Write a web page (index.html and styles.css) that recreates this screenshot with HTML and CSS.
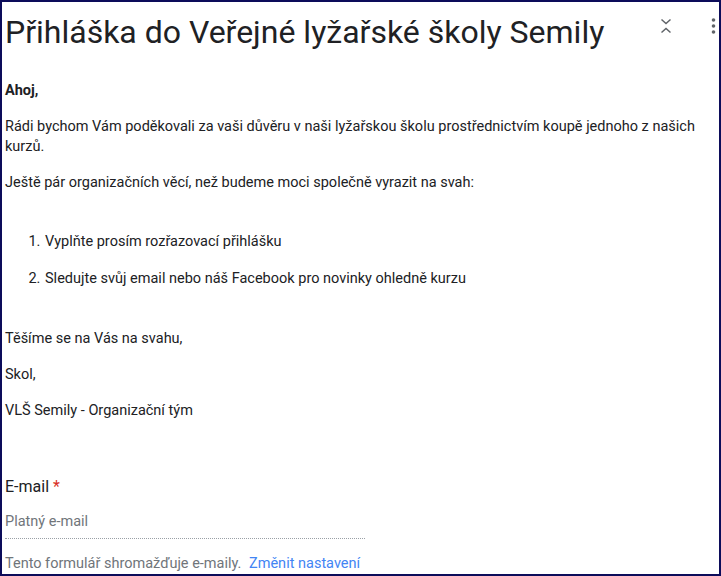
FILE: index.html
```html
<!DOCTYPE html>
<html lang="cs">
<head>
  <meta charset="UTF-8">
  <title>Přihláška do Veřejné lyžařské školy Semily</title>
  <link rel="stylesheet" href="styles.css">
</head>
<body>
  <div class="frame">
    <div class="form-header">
      <h1 class="form-title">Přihláška do Veřejné lyžařské školy Semily</h1>
      <div class="header-tools">
        <button class="icon-btn collapse-btn" aria-label="Sbalit">
          <svg width="12" height="16" viewBox="0 0 12 16" fill="none" stroke="currentColor" stroke-width="1.5">
            <path d="M1.5 1.5l4.5 4 4.5-4" />
            <path d="M1.5 14.5l4.5-4 4.5 4" />
          </svg>
        </button>
        <button class="icon-btn more-btn" aria-label="Další">
          <svg width="5" height="16" viewBox="0 0 5 16" fill="currentColor">
            <circle cx="2.5" cy="2" r="1.8" />
            <circle cx="2.5" cy="8" r="1.8" />
            <circle cx="2.5" cy="14" r="1.8" />
          </svg>
        </button>
      </div>
    </div>

    <div class="form-desc">
      <p><b>Ahoj,</b></p>
      <p>Rádi bychom Vám poděkovali za vaši důvěru v naši lyžařskou školu prostřednictvím koupě jednoho z našich kurzů.</p>
      <p>Ještě pár organizačních věcí, než budeme moci společně vyrazit na svah:</p>
      <p class="empty"></p>
      <ol>
        <li>Vyplňte prosím rozřazovací přihlášku</li>
        <li>Sledujte svůj email nebo náš Facebook pro novinky ohledně kurzu</li>
      </ol>
      <p class="empty"></p>
      <p>Těšíme se na Vás na svahu,</p>
      <p>Skol,</p>
      <p>VLŠ Semily - Organizační tým</p>
    </div>

    <div class="question">
      <div class="question-title">E-mail <span class="required">*</span></div>
      <div class="text-input">Platný e-mail</div>
      <div class="collect-note">
        Tento formulář shromažďuje e-maily.
        <a href="#" class="note-link">Změnit nastavení</a>
      </div>
    </div>
  </div>
</body>
</html>
```

FILE: styles.css
```css
* {
  box-sizing: border-box;
}

body {
  margin: 0;
  font-family: Roboto, "Liberation Sans", sans-serif;
  background: #fff;
  color: #202124;
}

.frame {
  width: 721px;
  height: 576px;
  border: 2px solid #0c0c5a;
  padding: 0 0 0 3px;
  overflow: hidden;
}

.form-header {
  display: flex;
  align-items: flex-start;
}

.form-title {
  flex: 1;
  min-width: 0;
  margin: 10px 0 0;
  font-size: 32px;
  font-weight: 400;
  line-height: 40px;
  color: #202124;
  white-space: nowrap;
}

.header-tools {
  display: flex;
  align-items: center;
  gap: 39px;
  padding: 16px 3px 0 0;
}

.icon-btn {
  background: none;
  border: none;
  padding: 0;
  color: #5f6368;
  cursor: pointer;
  display: flex;
}

.form-desc {
  margin-top: 29px;
  font-size: 14.5px;
  line-height: 20px;
  padding-right: 10px;
}

.form-desc p {
  margin: 0 0 16px;
}

.form-desc p.empty {
  height: 7px;
}

.form-desc ol {
  margin: 0;
  padding-left: 39px;
}

.form-desc li {
  margin-bottom: 17px;
  padding-left: 1px;
}

.question {
  margin-top: 54px;
}

.question-title {
  font-size: 16px;
  line-height: 24px;
}

.required {
  color: #d93025;
}

.text-input {
  width: 360px;
  margin-top: 13px;
  padding-bottom: 6px;
  font-size: 14.5px;
  line-height: 20px;
  color: #70757a;
  border-bottom: 1px dotted #9aa0a6;
}

.collect-note {
  margin-top: 15px;
  font-size: 14.5px;
  line-height: 20px;
  color: #70757a;
}

.note-link {
  margin-left: 4px;
  color: #4285f4;
  text-decoration: none;
}
```
